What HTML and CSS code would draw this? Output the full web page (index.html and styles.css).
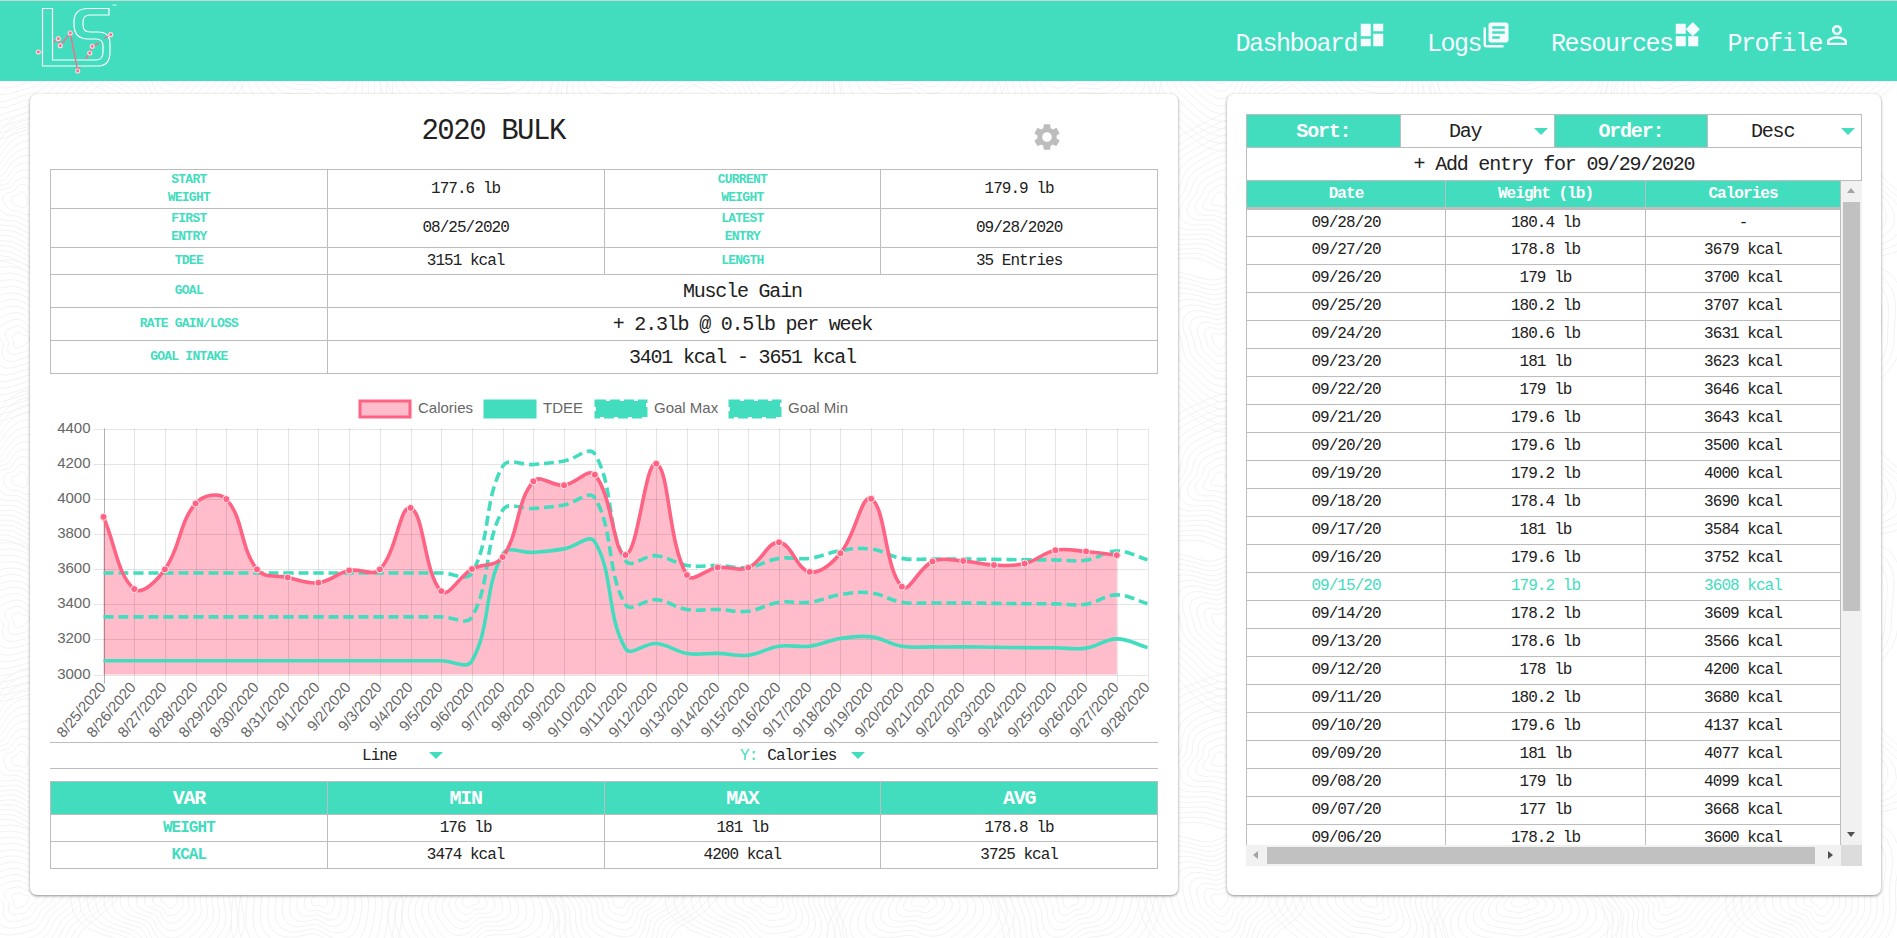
FILE: index.html
```html
<!DOCTYPE html>
<html lang="en">

<head>
  <meta charset="UTF-8">
  <meta name="viewport" content="width=device-width, initial-scale=1.0">
  <title>2020 Bulk</title>
  <link rel="stylesheet" href="styles.css">
</head>

<body>
  <svg id="contours" class="contours" aria-hidden="true"></svg>

  <header class="topbar">
    <svg class="logo" viewBox="0 0 130 80" width="130" height="80">
      <path class="logo-letters" d="M42.5 8.5H52.5V60H96Q103 60 103 52V46Q103 39 96 39H88Q74 39 74 24V22Q74 8.5 88 8.5H109V15H90Q83 15 83 22V25Q83 32 90 32H98Q110 32 110 44V52Q110 66 98 66H42.5Z" />
      <path class="logo-line" d="M38.3 52L41 50.5M53.5 42L58.3 38.7L60.3 45.7L70.3 33L77.7 71L80 67.5M85.5 59L89.7 53L92.3 46.3L99 43M104 38.5L110.7 34.7" />
      <g class="logo-dots">
        <circle cx="38.3" cy="52" r="2" />
        <circle cx="58.3" cy="38.7" r="2" />
        <circle cx="60.3" cy="45.7" r="2" />
        <circle cx="70.3" cy="33" r="2" />
        <circle cx="77.7" cy="71" r="2" />
        <circle cx="89.7" cy="53" r="2" />
        <circle cx="92.3" cy="46.3" r="2" />
        <circle cx="110.7" cy="34.7" r="2" />
      </g>
      <path class="logo-tm" d="M112.500 5H116.500" />
    </svg>

    <nav class="nav">
      <a class="nav-link">Dashboard
        <svg viewBox="0 0 24 24"><path d="M3 13h8V3H3v10zm0 8h8v-6H3v6zm10 0h8V11h-8v10zm0-18v6h8V3h-8z" /></svg>
      </a>
      <a class="nav-link">Logs
        <svg viewBox="0 0 24 24"><path d="M4 6H2v14c0 1.1.9 2 2 2h14v-2H4V6zm16-4H8c-1.1 0-2 .9-2 2v12c0 1.1.9 2 2 2h12c1.1 0 2-.9 2-2V4c0-1.1-.9-2-2-2zm-1 9H9V9h10v2zm-4 4H9v-2h6v2zm4-8H9V5h10v2z" /></svg>
      </a>
      <a class="nav-link">Resources
        <svg viewBox="0 0 24 24"><path d="M13 13v8h8v-8h-8zM3 21h8v-8H3v8zM3 3v8h8V3H3zm13.66-1.31L11 7.34 16.66 13l5.66-5.66-5.66-5.65z" /></svg>
      </a>
      <a class="nav-link nav-link-profile">Profile
        <svg viewBox="0 0 24 24"><path d="M12 5.9c1.16 0 2.1.94 2.1 2.1s-.94 2.1-2.1 2.1S9.9 9.16 9.9 8s.94-2.1 2.1-2.1m0 9c2.97 0 6.1 1.46 6.1 2.1v1.1H5.9V17c0-.64 3.13-2.1 6.1-2.1M12 4C9.79 4 8 5.790 8 8s1.79 4 4 4 4-1.79 4-4-1.79-4-4-4zm0 9c-2.67 0-8 1.34-8 4v3h16v-3c0-2.66-5.33-4-8-4z" /></svg>
      </a>
    </nav>
  </header>

  <main class="layout">
    <section class="card card-main">
      <div class="title-row">
        <h1>2020 BULK</h1>
        <svg class="gear" viewBox="0 0 24 24"><path d="M19.14 12.94c.04-.3.06-.61.06-.94 0-.32-.02-.64-.07-.94l2.03-1.58c.18-.14.23-.41.12-.61l-1.92-3.32c-.12-.22-.37-.29-.59-.22l-2.39.96c-.5-.38-1.03-.7-1.62-.94l-.36-2.54c-.04-.24-.24-.41-.48-.41h-3.84c-.24 0-.43.17-.47.41l-.36 2.54c-.59.24-1.13.57-1.62.94l-2.39-.96c-.22-.08-.47 0-.59.22L2.74 8.87c-.12.21-.08.47.12.61l2.03 1.58c-.05.3-.09.63-.09.94s.02.64.07.94l-2.03 1.58c-.18.14-.23.41-.12.61l1.92 3.32c.12.22.37.29.59.22l2.39-.96c.5.38 1.03.7 1.62.94l.36 2.54c.05.24.24.41.48.41h3.84c.24 0 .44-.17.47-.41l.36-2.54c.59-.24 1.13-.56 1.62-.94l2.39.96c.22.08.47 0 .59-.22l1.92-3.32c.12-.22.07-.47-.12-.61l-2.01-1.58zM12 15.6c-1.98 0-3.6-1.62-3.6-3.6s1.62-3.6 3.6-3.6 3.6 1.62 3.6 3.6-1.62 3.6-3.6 3.6z" /></svg>
      </div>

      <table class="grid info">
        <tr class="row-tall">
          <th>START<br>WEIGHT</th>
          <td>177.6 lb</td>
          <th>CURRENT<br>WEIGHT</th>
          <td>179.9 lb</td>
        </tr>
        <tr class="row-tall">
          <th>FIRST<br>ENTRY</th>
          <td>08/25/2020</td>
          <th>LATEST<br>ENTRY</th>
          <td>09/28/2020</td>
        </tr>
        <tr class="row-short">
          <th>TDEE</th>
          <td>3151 kcal</td>
          <th>LENGTH</th>
          <td>35 Entries</td>
        </tr>
        <tr class="row-big">
          <th>GOAL</th>
          <td colspan="3">Muscle Gain</td>
        </tr>
        <tr class="row-big">
          <th>RATE GAIN/LOSS</th>
          <td colspan="3">+ 2.3lb @ 0.5lb per week</td>
        </tr>
        <tr class="row-big">
          <th>GOAL INTAKE</th>
          <td colspan="3">3401 kcal - 3651 kcal</td>
        </tr>
      </table>

      <svg id="chart" class="chart" viewBox="0 0 1108 368"></svg>

      <div class="chart-options">
        <div class="chart-option chart-option-type">Line<span class="caret"></span></div>
        <div class="chart-option chart-option-y"><span class="accent">Y:</span><span class="y-value">Calories</span><span class="caret"></span></div>
      </div>

      <table class="grid stats">
        <tr class="stats-head">
          <th>VAR</th>
          <th>MIN</th>
          <th>MAX</th>
          <th>AVG</th>
        </tr>
        <tr>
          <td class="accent"><b>WEIGHT</b></td>
          <td>176 lb</td>
          <td>181 lb</td>
          <td>178.8 lb</td>
        </tr>
        <tr>
          <td class="accent"><b>KCAL</b></td>
          <td>3474 kcal</td>
          <td>4200 kcal</td>
          <td>3725 kcal</td>
        </tr>
      </table>
    </section>

    <section class="card card-log">
      <table class="grid controls">
        <tr class="controls-row">
          <th>Sort:</th>
          <td class="select">Day<span class="caret"></span></td>
          <th>Order:</th>
          <td class="select">Desc<span class="caret"></span></td>
        </tr>
        <tr class="controls-row">
          <td colspan="4">+ Add entry for 09/29/2020</td>
        </tr>
      </table>

      <div class="log-scroll">
        <div class="log-view">
          <table class="grid log">
            <tr class="log-head">
              <th>Date</th>
              <th>Weight (lb)</th>
              <th>Calories</th>
            </tr>
            <tr><td>09/28/20</td><td>180.4 lb</td><td>-</td></tr>
            <tr><td>09/27/20</td><td>178.8 lb</td><td>3679 kcal</td></tr>
            <tr><td>09/26/20</td><td>179 lb</td><td>3700 kcal</td></tr>
            <tr><td>09/25/20</td><td>180.2 lb</td><td>3707 kcal</td></tr>
            <tr><td>09/24/20</td><td>180.6 lb</td><td>3631 kcal</td></tr>
            <tr><td>09/23/20</td><td>181 lb</td><td>3623 kcal</td></tr>
            <tr><td>09/22/20</td><td>179 lb</td><td>3646 kcal</td></tr>
            <tr><td>09/21/20</td><td>179.6 lb</td><td>3643 kcal</td></tr>
            <tr><td>09/20/20</td><td>179.6 lb</td><td>3500 kcal</td></tr>
            <tr><td>09/19/20</td><td>179.2 lb</td><td>4000 kcal</td></tr>
            <tr><td>09/18/20</td><td>178.4 lb</td><td>3690 kcal</td></tr>
            <tr><td>09/17/20</td><td>181 lb</td><td>3584 kcal</td></tr>
            <tr><td>09/16/20</td><td>179.6 lb</td><td>3752 kcal</td></tr>
            <tr class="accent"><td>09/15/20</td><td>179.2 lb</td><td>3608 kcal</td></tr>
            <tr><td>09/14/20</td><td>178.2 lb</td><td>3609 kcal</td></tr>
            <tr><td>09/13/20</td><td>178.6 lb</td><td>3566 kcal</td></tr>
            <tr><td>09/12/20</td><td>178 lb</td><td>4200 kcal</td></tr>
            <tr><td>09/11/20</td><td>180.2 lb</td><td>3680 kcal</td></tr>
            <tr><td>09/10/20</td><td>179.6 lb</td><td>4137 kcal</td></tr>
            <tr><td>09/09/20</td><td>181 lb</td><td>4077 kcal</td></tr>
            <tr><td>09/08/20</td><td>179 lb</td><td>4099 kcal</td></tr>
            <tr><td>09/07/20</td><td>177 lb</td><td>3668 kcal</td></tr>
            <tr><td>09/06/20</td><td>178.2 lb</td><td>3600 kcal</td></tr>
          </table>
        </div>

        <div class="scrollbar scrollbar-v">
          <span class="arrow arrow-up"></span>
          <span class="thumb thumb-v"></span>
          <span class="arrow arrow-down"></span>
        </div>
        <div class="scrollbar scrollbar-h">
          <span class="arrow arrow-left"></span>
          <span class="thumb thumb-h"></span>
          <span class="arrow arrow-right"></span>
        </div>
        <div class="scroll-corner"></div>
      </div>
    </section>
  </main>

  <script src="main.js"></script>
</body>

</html>
```

FILE: styles.css
```css
* {
  box-sizing: border-box;
}

html,
body {
  height: 938px;
  overflow: hidden;
}

body {
  margin: 0;
  position: relative;
  background-color: #fff;
  color: #212121;
  font-family: "Liberation Mono", monospace;
  font-size: 16px;
  letter-spacing: -0.06em;
}

.contours {
  position: absolute;
  top: 0;
  left: 0;
  width: 1897px;
  height: 938px;
}

.contours path {
  fill: none;
  stroke: #f3f3f3;
  stroke-width: 1;
}

.accent {
  color: #42ddbe;
}

/* top bar */
.topbar {
  position: relative;
  display: flex;
  justify-content: space-between;
  height: 81px;
  background-color: #42ddbe;
  border-top: 1px solid #c9d8d4;
}

.logo {
  margin-top: -1px;
}

.logo-letters {
  fill: none;
  stroke: #fff;
  stroke-width: 1.2;
}

.logo-line {
  fill: none;
  stroke: #f0708c;
  stroke-width: 1.4;
}

.logo-dots circle {
  fill: #f0708c;
  stroke: #fbd9e0;
  stroke-width: 1.2;
}

.logo-tm {
  stroke: #c8f5ea;
  stroke-width: 1.2;
}

.nav {
  display: flex;
  gap: 40px;
  padding: 29px 45px 0 0;
}

.nav-link {
  display: flex;
  align-items: flex-start;
  color: #f5fbff;
  font-size: 25px;
  letter-spacing: -0.06em;
  line-height: 30px;
}

.nav-link svg {
  width: 30px;
  height: 30px;
  margin-top: -10px;
  fill: #f5fbff;
}

.nav-link-profile {
  margin-left: -15px;
}

/* cards */
.layout {
  position: relative;
  display: grid;
  grid-template-columns: 1148px 654px;
  gap: 49px;
  padding: 13px 0 0 30px;
}

.card {
  height: 801px;
  background-color: #fff;
  border-radius: 7px;
  box-shadow: 0 1px 3px rgba(0, 0, 0, 0.45);
}

.card-main {
  padding: 0 20px;
}

.card-log {
  padding: 20px 19px;
}

.title-row {
  display: grid;
  grid-template-columns: 80% 20%;
  align-items: center;
  height: 75px;
}

h1 {
  margin: 0;
  font-size: 29px;
  font-weight: normal;
  letter-spacing: -0.05em;
  text-align: center;
}

.gear {
  width: 32px;
  height: 32px;
  margin-top: 11px;
  justify-self: center;
  fill: #bdbdbd;
}

/* tables */
.grid {
  width: 100%;
  table-layout: fixed;
  border-collapse: collapse;
  text-align: center;
}

.grid th,
.grid td {
  padding: 0;
  border: 1px solid #bdbdbd;
}

.info th {
  color: #42ddbe;
  font-size: 13px;
  letter-spacing: -0.06em;
  line-height: 18px;
}

.row-tall {
  height: 39px;
}

.row-short {
  height: 27px;
}

.row-big {
  height: 33px;
}

.row-big td {
  font-size: 20px;
  letter-spacing: -0.06em;
}

.chart {
  display: block;
  width: 1108px;
  height: 368px;
  overflow: visible;
}

.chart-options {
  display: grid;
  grid-template-columns: 1fr 1fr;
  height: 27px;
  margin-bottom: 12px;
  border-top: 1px solid #bdbdbd;
  border-bottom: 1px solid #bdbdbd;
}

.chart-option {
  display: flex;
  align-items: center;
}

.chart-option-type {
  padding-left: 312px;
}

.chart-option-y {
  padding-left: 136px;
}

.y-value {
  margin-left: 10px;
}

.caret {
  display: inline-block;
  width: 0;
  height: 0;
  border-top: 7px solid #42ddbe;
  border-left: 7px solid transparent;
  border-right: 7px solid transparent;
}

.chart-option-type .caret {
  margin-left: 32px;
}

.chart-option-y .caret {
  margin-left: 15px;
}

.stats-head {
  background-color: #42ddbe;
  color: #fff;
  font-size: 20px;
  letter-spacing: -0.06em;
}

.stats tr {
  height: 27px;
}

.stats tr.stats-head {
  height: 33px;
}

.controls {
  font-size: 20px;
  letter-spacing: -0.06em;
}

.controls-row {
  height: 33px;
}

.controls th {
  background-color: #42ddbe;
  color: #fff;
}

.select {
  position: relative;
  padding-right: 24px !important;
}

.select .caret {
  position: absolute;
  top: 13px;
  right: 6px;
}

/* entries list with its scrollbars */
.log-scroll {
  display: grid;
  grid-template-columns: 595px 21px;
  grid-template-rows: 664px 21px;
  width: 616px;
  background-color: #f1f1f1;
}

.log-view {
  overflow: hidden;
  background-color: #fff;
}

.log-head {
  background-color: #42ddbe;
  color: #fff;
}

.log tr {
  height: 28px;
}

.log td {
  line-height: 14px;
}

.log tr.log-head {
  height: 27px;
}

.log-head th {
  border-bottom-width: 3px;
  border-top: none;
}

.log th:first-child,
.log td:first-child {
  width: 199px;
}

.log th:nth-child(2),
.log td:nth-child(2) {
  width: 200px;
}

.scrollbar {
  display: flex;
  justify-content: space-between;
  align-items: center;
  background-color: #f1f1f1;
}

.scrollbar-v {
  flex-direction: column;
}

.thumb {
  background-color: #c1c1c1;
}

.thumb-v {
  flex: none;
  width: 17px;
  height: 409px;
  margin: 0 0 auto;
}

.thumb-h {
  flex: none;
  width: 548px;
  height: 17px;
  margin: 0 auto 0 0;
}

.arrow {
  flex: none;
  width: 21px;
  height: 21px;
  display: block;
  position: relative;
}

.arrow::after {
  content: "";
  position: absolute;
  top: 6px;
  left: 6px;
  width: 0;
  height: 0;
  border: 4px solid transparent;
}

.arrow-up::after {
  top: 3px;
  border-bottom: 5px solid #a3a3a3;
}

.arrow-down::after {
  top: 8px;
  border-top: 5px solid #505050;
}

.arrow-left::after {
  left: 3px;
  border-right: 5px solid #a3a3a3;
}

.arrow-right::after {
  left: 8px;
  border-left: 5px solid #505050;
}

.scroll-corner {
  background-color: #dcdcdc;
}
```

FILE: main.js
```js
const SVG_NS = 'http://www.w3.org/2000/svg';

function el(parent, name, attrs, text) {
  const node = document.createElementNS(SVG_NS, name);
  Object.keys(attrs).forEach(key => node.setAttribute(key, attrs[key]));
  if (text) node.textContent = text;
  parent.appendChild(node);
  return node;
}

// Page background: rings of wobbly topographic lines
function drawContours() {
  const svg = document.getElementById('contours');
  let seed = 0;
  for (let cy = 60; cy < 1000; cy += 140) {
    for (let cx = 20; cx < 1950; cx += 150) {
      seed++;
      const a = seed * 1.7;
      const b = seed * 2.9;
      for (let r = 8; r < 86; r += 7) {
        let d = '';
        for (let i = 0; i <= 48; i++) {
          const t = (i / 48) * Math.PI * 2;
          const k = r * (1 + 0.16 * Math.sin(3 * t + a) + 0.08 * Math.sin(5 * t + b));
          d += (i ? 'L' : 'M') + (cx + k * Math.cos(t)).toFixed(1) + ' ' + (cy + k * 0.9 * Math.sin(t)).toFixed(1);
        }
        el(svg, 'path', { d: d + 'Z' });
      }
    }
  }
}

// Same spline as the chart library: tension 0.4
function spline(pts) {
  const tension = 0.4;
  const ctrl = pts.map((p, i) => {
    const prev = pts[i - 1] || p;
    const next = pts[i + 1] || p;
    const d01 = Math.hypot(p.x - prev.x, p.y - prev.y);
    const d12 = Math.hypot(next.x - p.x, next.y - p.y);
    const total = d01 + d12 || 1;
    const fa = tension * d01 / total;
    const fb = tension * d12 / total;
    return {
      x1: p.x - fa * (next.x - prev.x),
      y1: p.y - fa * (next.y - prev.y),
      x2: p.x + fb * (next.x - prev.x),
      y2: p.y + fb * (next.y - prev.y)
    };
  });
  let d = 'M' + pts[0].x + ' ' + pts[0].y;
  for (let i = 1; i < pts.length; i++) {
    d += 'C' + ctrl[i - 1].x2 + ' ' + ctrl[i - 1].y2 + ' ' + ctrl[i].x1 + ' ' + ctrl[i].y1 + ' ' + pts[i].x + ' ' + pts[i].y;
  }
  return d;
}

function drawChart() {
  const svg = document.getElementById('chart');
  const left = 53.5;
  const right = 1097.5;
  const top = 54.5;
  const bottom = 300.5;
  const teal = '#42ddbe';
  const pink = '#ff6384';
  const font = { 'font-family': '"Liberation Sans", sans-serif', 'font-size': 15, fill: '#666', 'letter-spacing': 0 };

  const calories = [3897, 3486, 3598, 3973, 3998, 3598, 3552, 3522, 3592, 3598, 3948, 3474, 3600, 3668, 4099, 4077, 4137,
    3680, 4200, 3566, 3609, 3608, 3752, 3584, 3690, 4000, 3500, 3643, 3646, 3623, 3631, 3707, 3700, 3679];
  const tdee = [3078, 3078, 3078, 3078, 3078, 3078, 3078, 3078, 3078, 3078, 3078, 3078, 3078, 3685, 3695, 3715, 3755,
    3148, 3176, 3120, 3120, 3110, 3161, 3161, 3205, 3214, 3161, 3157, 3157, 3155, 3153, 3152, 3150, 3203, 3153];

  const labels = [];
  for (let i = 25; i <= 31; i++) labels.push('8/' + i + '/2020');
  for (let i = 1; i <= 28; i++) labels.push('9/' + i + '/2020');

  const step = (right - left) / (labels.length - 1);
  const xAt = i => left + i * step;
  const yAt = v => bottom - (v - 3000) * (bottom - top) / 1400;
  const toPts = values => values.map((v, i) => ({ x: xAt(i), y: yAt(v) }));

  // Legend
  const legend = [
    { x: 310, label: 'Calories', fill: '#ffbccb', stroke: pink },
    { x: 435, label: 'TDEE', fill: teal, stroke: teal },
    { x: 546, label: 'Goal Max', fill: teal, stroke: teal, dash: '10 4' },
    { x: 680, label: 'Goal Min', fill: teal, stroke: teal, dash: '10 4' }
  ];
  legend.forEach(item => {
    el(svg, 'rect', {
      x: item.x, y: 27, width: 50, height: 16, fill: item.fill, stroke: item.stroke,
      'stroke-width': 3, 'stroke-dasharray': item.dash || 'none'
    });
    el(svg, 'text', Object.assign({ x: item.x + 58, y: 39 }, font), item.label);
  });

  // Fill goes under the grid, the grid shows through it
  const calPts = toPts(calories);
  el(svg, 'path', {
    d: spline(calPts) + 'L' + calPts[calPts.length - 1].x + ' ' + bottom + 'L' + left + ' ' + bottom + 'Z',
    fill: '#ffbccb'
  });

  // Grid, ticks and labels
  for (let v = 3000; v <= 4400; v += 200) {
    const y = Math.round(yAt(v)) + 0.5;
    el(svg, 'line', { x1: left - 10, x2: right, y1: y, y2: y, stroke: 'rgba(0,0,0,0.1)' });
    el(svg, 'text', Object.assign({ x: left - 13, y: y + 3, 'text-anchor': 'end' }, font), String(v));
  }
  labels.forEach((label, i) => {
    const x = Math.round(xAt(i)) + 0.5;
    el(svg, 'line', {
      x1: x, x2: x, y1: top, y2: bottom + 9,
      stroke: i === 0 ? 'rgba(0,0,0,0.3)' : 'rgba(0,0,0,0.1)'
    });
    el(svg, 'text', Object.assign({
      x: x + 2, y: bottom + 13, 'text-anchor': 'end',
      transform: 'rotate(-50 ' + (x + 2) + ' ' + (bottom + 13) + ')'
    }, font), label);
  });

  // Lines
  const line = (values, dash, color) => el(svg, 'path', {
    d: spline(toPts(values)), fill: 'none', stroke: color, 'stroke-width': 3.6, 'stroke-dasharray': dash || 'none'
  });
  line(tdee.map(v => v + 500), '10 5', teal);
  line(tdee.map(v => v + 250), '10 5', teal);
  line(tdee, null, teal);
  line(calories, null, pink);
  calPts.forEach(p => {
    el(svg, 'circle', { cx: p.x, cy: p.y, r: 3.5, fill: pink, stroke: '#ffe4ea', 'stroke-width': 1 });
  });
}

drawContours();
drawChart();
```
